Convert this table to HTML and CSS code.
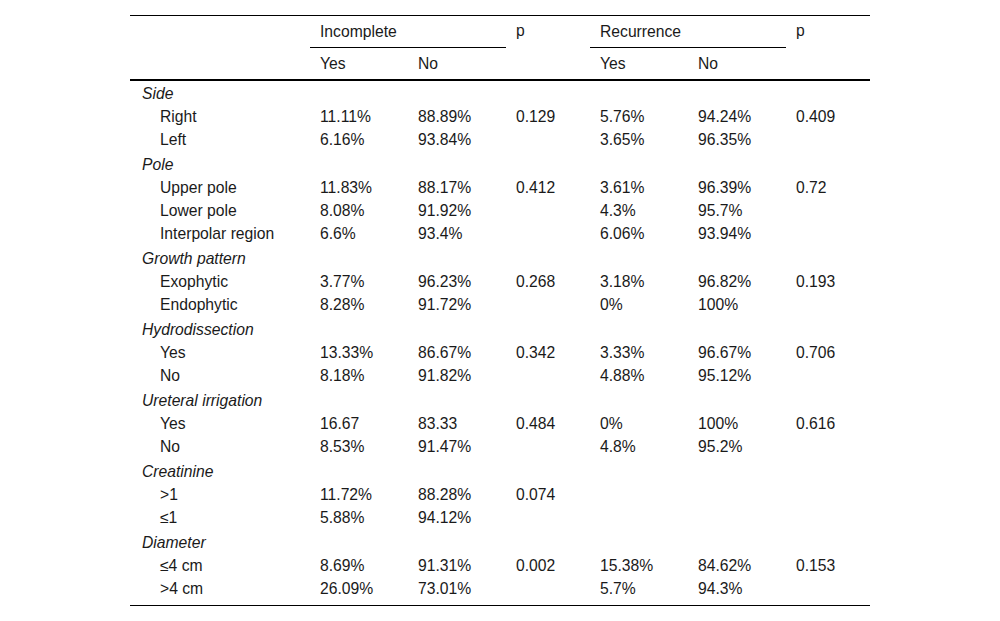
FILE: index.html
```html
<!DOCTYPE html>
<html lang="en">
<head>
<meta charset="utf-8">
<title>Table</title>
<link rel="stylesheet" href="styles.css">
</head>
<body>
<div class="wrap">
<table class="data">
<colgroup>
<col class="c-label"><col class="c-val"><col class="c-val"><col class="c-p"><col class="c-val"><col class="c-val"><col class="c-p">
</colgroup>
<thead>
<tr class="h1">
<th class="blank"></th>
<th colspan="2" class="grp"><span>Incomplete</span></th>
<th rowspan="2" class="pcol">p</th>
<th colspan="2" class="grp"><span>Recurrence</span></th>
<th rowspan="2" class="pcol">p</th>
</tr>
<tr class="h2">
<th></th><th>Yes</th><th>No</th><th>Yes</th><th>No</th>
</tr>
</thead>
<tbody>
<tr class="cat first"><td colspan="7">Side</td></tr>
<tr><td class="lbl">Right</td><td>11.11%</td><td>88.89%</td><td>0.129</td><td>5.76%</td><td>94.24%</td><td>0.409</td></tr>
<tr><td class="lbl">Left</td><td>6.16%</td><td>93.84%</td><td></td><td>3.65%</td><td>96.35%</td><td></td></tr>
<tr class="cat"><td colspan="7">Pole</td></tr>
<tr><td class="lbl">Upper pole</td><td>11.83%</td><td>88.17%</td><td>0.412</td><td>3.61%</td><td>96.39%</td><td>0.72</td></tr>
<tr><td class="lbl">Lower pole</td><td>8.08%</td><td>91.92%</td><td></td><td>4.3%</td><td>95.7%</td><td></td></tr>
<tr><td class="lbl">Interpolar region</td><td>6.6%</td><td>93.4%</td><td></td><td>6.06%</td><td>93.94%</td><td></td></tr>
<tr class="cat"><td colspan="7">Growth pattern</td></tr>
<tr><td class="lbl">Exophytic</td><td>3.77%</td><td>96.23%</td><td>0.268</td><td>3.18%</td><td>96.82%</td><td>0.193</td></tr>
<tr><td class="lbl">Endophytic</td><td>8.28%</td><td>91.72%</td><td></td><td>0%</td><td>100%</td><td></td></tr>
<tr class="cat"><td colspan="7">Hydrodissection</td></tr>
<tr><td class="lbl">Yes</td><td>13.33%</td><td>86.67%</td><td>0.342</td><td>3.33%</td><td>96.67%</td><td>0.706</td></tr>
<tr><td class="lbl">No</td><td>8.18%</td><td>91.82%</td><td></td><td>4.88%</td><td>95.12%</td><td></td></tr>
<tr class="cat"><td colspan="7">Ureteral irrigation</td></tr>
<tr><td class="lbl">Yes</td><td>16.67</td><td>83.33</td><td>0.484</td><td>0%</td><td>100%</td><td>0.616</td></tr>
<tr><td class="lbl">No</td><td>8.53%</td><td>91.47%</td><td></td><td>4.8%</td><td>95.2%</td><td></td></tr>
<tr class="cat"><td colspan="7">Creatinine</td></tr>
<tr><td class="lbl">&gt;1</td><td>11.72%</td><td>88.28%</td><td>0.074</td><td></td><td></td><td></td></tr>
<tr><td class="lbl">≤1</td><td>5.88%</td><td>94.12%</td><td></td><td></td><td></td><td></td></tr>
<tr class="cat"><td colspan="7">Diameter</td></tr>
<tr><td class="lbl">≤4 cm</td><td>8.69%</td><td>91.31%</td><td>0.002</td><td>15.38%</td><td>84.62%</td><td>0.153</td></tr>
<tr class="last"><td class="lbl">&gt;4 cm</td><td>26.09%</td><td>73.01%</td><td></td><td>5.7%</td><td>94.3%</td><td></td></tr>
</tbody>
</table>
</div>
</body>
</html>
```

FILE: styles.css
```css
html, body {
  margin: 0;
  padding: 0;
  background: #fff;
}
body {
  font-family: "Liberation Sans", Arial, sans-serif;
  font-size: 15.7px;
  color: #1a1a1a;
}
.wrap {
  padding: 15px 0 0 130px;
}
.data {
  border-collapse: collapse;
  table-layout: fixed;
  width: 740px;
  border-top: 1px solid #000;
  border-bottom: 1px solid #000;
}
.c-label { width: 180px; }
.c-val { width: 98px; }
.c-p { width: 84px; }
.data th {
  font-weight: normal;
  text-align: left;
  padding: 0 0 0 10px;
  vertical-align: middle;
  line-height: 18px;
}
.h1 th {
  height: 31px;
}
.h1 th.grp {
  padding: 0;
  border-bottom: 1px solid #000;
}
.h1 th.grp span {
  display: block;
  padding-left: 10px;
}
.h1 th.pcol {
  vertical-align: top;
  padding-top: 6px;
  border-bottom: 2px solid #000;
}
.h2 th {
  height: 31px;
  border-bottom: 2px solid #000;
}
.data td {
  padding: 0 0 0 10px;
  height: 23px;
  line-height: 18px;
  white-space: nowrap;
  vertical-align: middle;
}
.data td.lbl {
  padding-left: 30px;
}
.cat td {
  font-style: italic;
  padding-left: 12px;
  padding-top: 2px;
  height: 23px;
}
.cat.first td {
  padding-top: 1px;
}
.last td {
  height: 23px;
  padding-bottom: 5px;
}
```
